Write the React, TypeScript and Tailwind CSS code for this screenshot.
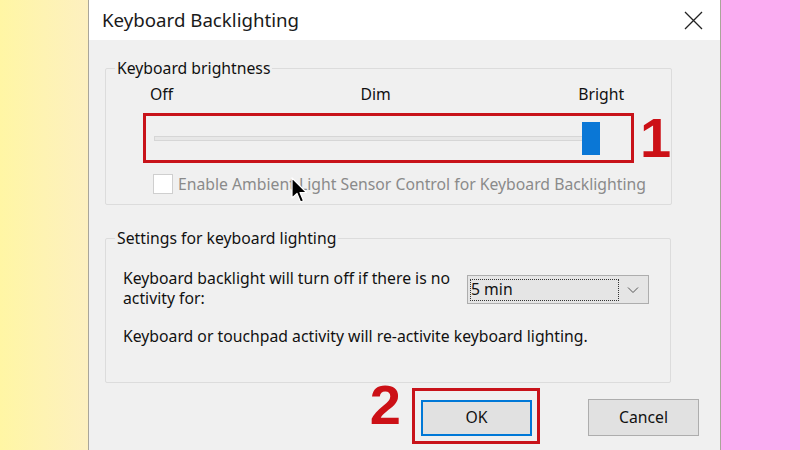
import React from "react";

const Cursor: React.FC = () => (
  <svg
    width="17"
    height="27"
    viewBox="0 0 17 27"
    className="absolute left-[291px] top-[177px]"
  >
    <path
      d="M1 1 L1 21 L6 16.5 L9.5 25 L12.5 23.8 L9 15.5 L15.5 15.5 Z"
      fill="#000"
      stroke="#fff"
      strokeWidth="1.2"
      strokeLinejoin="round"
    />
  </svg>
);

const App: React.FC = () => {
  return (
    <div className="relative w-[800px] h-[450px] flex overflow-hidden font-['Noto_Sans',sans-serif] text-[#111]">
      {/* left backdrop */}
      <div className="w-[88px] bg-gradient-to-r from-[#fff6a4] to-[#fdf0c0]" />

      {/* dialog */}
      <div className="w-[633px] flex flex-col border-l border-r border-[#a9a59a]">
        {/* title bar */}
        <div className="h-[40px] bg-white flex items-center justify-between pl-[13px] pr-[17px]">
          <span className="text-[18.7px] leading-none text-[#1a1a1a]">
            Keyboard Backlighting
          </span>
          <svg width="19" height="19" viewBox="0 0 19 19">
            <path d="M1 1 L18 18 M18 1 L1 18" stroke="#222" strokeWidth="1.3" />
          </svg>
        </div>

        {/* body */}
        <div className="flex-1 bg-[#f0f0f0] pl-[16px] pt-[19px] text-[15.75px]">
          {/* brightness group */}
          <fieldset className="mr-[49px] border border-[#dcdcdc] rounded-[2px] pb-[10px]">
            <legend className="ml-[9px] px-[2px] leading-[18px]">
              Keyboard brightness
            </legend>
            <div className="mt-[8px] flex justify-between pl-[44px] pr-[47px] leading-[18px]">
              <span>Off</span>
              <span>Dim</span>
              <span>Bright</span>
            </div>
            <div className="mt-[10px] flex items-center pl-[37px]">
              <div className="w-[491px] h-[50px] border-[3px] border-[#c8131a] flex items-center pl-[8px]">
                <div className="w-[436px] h-[5px] bg-[#e7e7e7] border border-[#d6d6d6]" />
                <div className="w-[18px] h-[33px] bg-[#0a77d6] -ml-[8px]" />
              </div>
              <span className="ml-[6px] text-[56px] leading-[44px] font-bold text-[#cc1016] font-['Liberation_Sans',sans-serif]">
                1
              </span>
            </div>
            <div className="mt-[11px] flex items-center pl-[47px] h-[20px]">
              <div className="w-[20px] h-[20px] bg-white border border-[#cfcfcf]" />
              <span className="ml-[5px] text-[#8a8a8a] leading-[20px]">
                Enable Ambient Light Sensor Control for Keyboard Backlighting
              </span>
            </div>
          </fieldset>

          {/* timeout group */}
          <fieldset className="mr-[49px] mt-[24px] border border-[#dcdcdc] rounded-[2px] pb-[36px]">
            <legend className="ml-[9px] px-[2px] leading-[18px]">
              Settings for keyboard lighting
            </legend>
            <div className="mt-[21px] flex items-start pl-[17px]">
              <p className="w-[335px] leading-[20px]">
                Keyboard backlight will turn off if there is no activity for:
              </p>
              <div className="ml-[9px] mt-[7px] w-[182px] h-[29px] bg-[#e5e5e5] border border-[#adadad] flex items-center pl-[2px] pr-[9px]">
                <div className="w-[149px] h-[22px] border border-dotted border-[#333] flex items-center leading-none">
                  5 min
                </div>
                <svg width="12" height="8" viewBox="0 0 12 8" className="ml-auto">
                  <path d="M1 1.5 L6 6.5 L11 1.5" fill="none" stroke="#555" strokeWidth="1" />
                </svg>
              </div>
            </div>
            <p className="mt-[18px] pl-[17px] leading-[20px]">
              Keyboard or touchpad activity will re-activite keyboard lighting.
            </p>
          </fieldset>

          {/* buttons */}
          <div className="mt-[5px] flex items-start justify-end pr-[21px]">
            <span className="-mt-[9px] mr-[11px] text-[56px] leading-[52px] font-bold text-[#cc1016] font-['Liberation_Sans',sans-serif]">
              2
            </span>
            <div className="border-[3px] border-[#c8131a] pt-[9px] pb-[5px] pl-[6px] pr-[5px]">
              <button className="w-[111px] h-[36px] bg-[#e1e1e1] border-2 border-[#0078d7] text-[15.75px]">
                OK
              </button>
            </div>
            <button className="ml-[48px] mt-[11px] w-[111px] h-[37px] bg-[#e1e1e1] border border-[#adadad] text-[15.75px]">
              Cancel
            </button>
          </div>
        </div>
      </div>

      {/* right backdrop */}
      <div className="flex-1 bg-[#fbadf2]" />

      <Cursor />
    </div>
  );
};

export default App;
